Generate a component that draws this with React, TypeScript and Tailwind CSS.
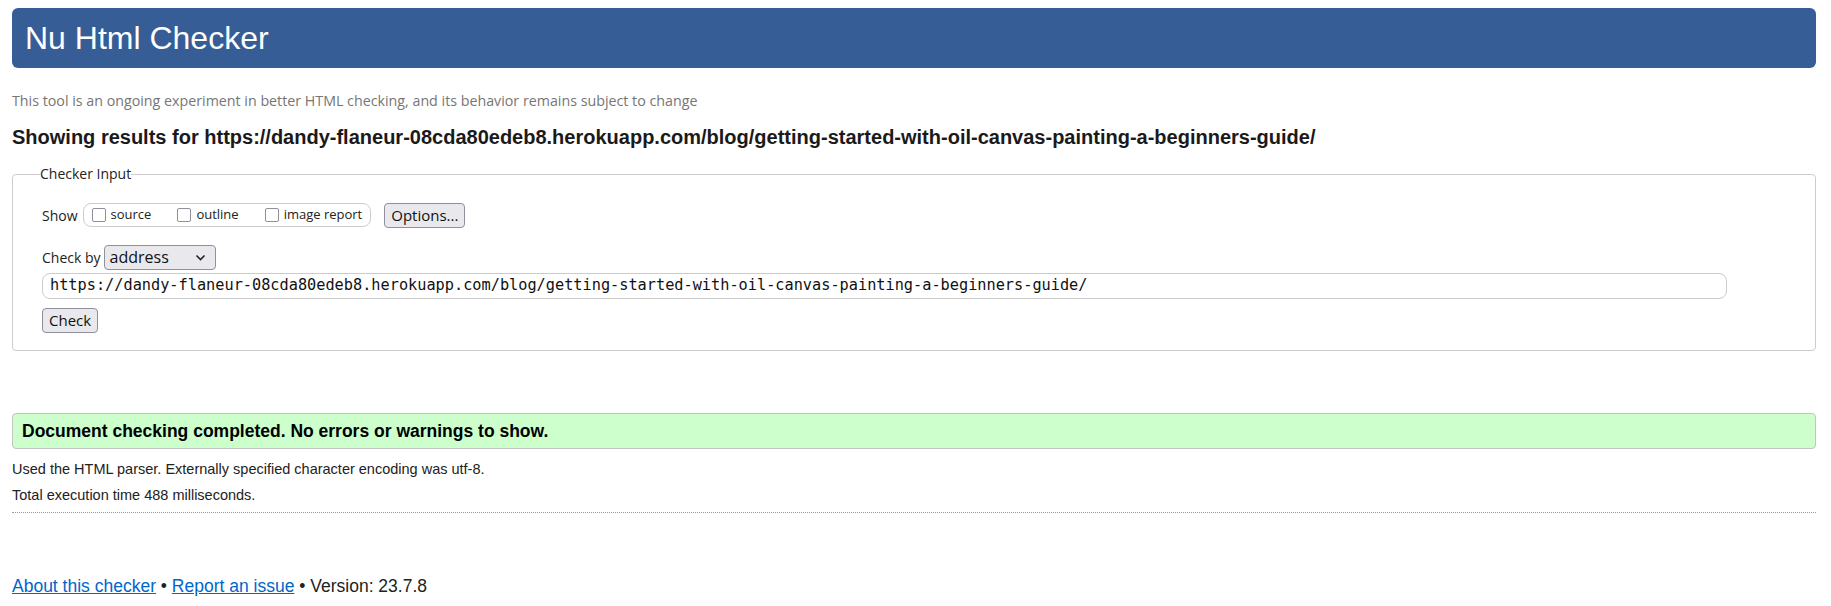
import React from 'react';

const URL = 'https://dandy-flaneur-08cda80edeb8.herokuapp.com/blog/getting-started-with-oil-canvas-painting-a-beginners-guide/';

const ui = "font-['Open_Sans',sans-serif]";

const Box: React.FC<{ label: string; gap?: string }> = ({ label, gap }) => (
  <label className={`flex items-center ${gap ?? ''}`}>
    <span className="w-[14px] h-[14px] border border-[#8f8f9d] rounded-[2px] bg-white" />
    <span className="ml-[5px] text-[13px] text-[#222]">{label}</span>
  </label>
);

export default function App() {
  return (
    <div className="bg-white min-h-[606px] pt-[8px] pl-[12px] pr-[15px] font-['Liberation_Sans',Arial,sans-serif] text-[#222]">
      <div className="h-[60px] bg-[#365d95] rounded-[6px] flex items-center pl-[13px]">
        <h1 className="text-white text-[32px] leading-none">Nu Html Checker</h1>
      </div>

      <p className={`mt-[23px] leading-[20px] text-[14.25px] text-[#767676] ${ui}`}>
        This tool is an ongoing experiment in better HTML checking, and its behavior remains subject to change
      </p>

      <h2 className="mt-[14px] leading-[24px] text-[20px] font-bold text-[#1a1a1a]">
        Showing results for {URL}
      </h2>

      <fieldset className={`mt-[16px] border border-[#cccccc] rounded-[4px] pl-[29px] pr-[29px] pt-[18px] pb-[17px] ${ui}`}>
        <legend className="-ml-[2px] px-0 text-[14px] leading-[18px] text-[#222]">Checker Input</legend>

        <div className="flex items-center h-[28px]">
          <span className="text-[14px]">Show</span>
          <div className="ml-[5px] h-[24px] flex items-center border border-[#cccccc] rounded-[8px] pl-[8px] pr-[8px]">
            <Box label="source" />
            <Box label="outline" gap="ml-[26px]" />
            <Box label="image report" gap="ml-[26px]" />
          </div>
          <button className="ml-[13px] h-[25px] px-[6px] bg-[#e9e9ed] border border-[#8f8f9d] rounded-[4px] text-[15px] leading-none text-[#111]">
            Options...
          </button>
        </div>

        <div className="flex items-center h-[26px] mt-[15px]">
          <span className="text-[14px]">Check by</span>
          <div className="ml-[3px] w-[112px] h-[25px] bg-[#e9e9ed] border border-[#8f8f9d] rounded-[4px] flex items-center justify-between pl-[5px] pr-[9px]">
            <span className="text-[16px] leading-none text-[#111]">address</span>
            <svg width="11" height="7" viewBox="0 0 11 7" fill="none">
              <path d="M1.5 1.5 L5.5 5.5 L9.5 1.5" stroke="#222" strokeWidth="1.6" />
            </svg>
          </div>
        </div>

        <div className="mt-[3px] w-[1685px] h-[26px] border border-[#cccccc] rounded-[8px] flex items-center pl-[7px]">
          <span className="font-['DejaVu_Sans_Mono',monospace] text-[15.25px] leading-none text-[#111] whitespace-nowrap">{URL}</span>
        </div>

        <button className="mt-[9px] h-[25px] px-[6px] bg-[#e9e9ed] border border-[#8f8f9d] rounded-[4px] text-[15px] leading-none text-[#111]">
          Check
        </button>
      </fieldset>

      <div className="mt-[62px] h-[36px] bg-[#ccffcc] border border-[#c4c4c4] rounded-[4px] flex items-center pl-[9px]">
        <p className="font-bold text-[17.5px] text-black">Document checking completed. No errors or warnings to show.</p>
      </div>

      <p className="mt-[10px] leading-[20px] text-[14.5px] text-[#222]">
        Used the HTML parser. Externally specified character encoding was utf-8.
      </p>
      <p className="mt-[6px] leading-[20px] text-[14.5px] text-[#222]">Total execution time 488 milliseconds.</p>

      <div className="mt-[7px] border-t border-dotted border-[#999999]" />

      <p className="mt-[62px] leading-[22px] text-[17.5px] text-[#222]">
        <a href="#" className="text-[#0066cc] underline">About this checker</a>
        {' • '}
        <a href="#" className="text-[#0066cc] underline">Report an issue</a>
        {' • Version: 23.7.8'}
      </p>
    </div>
  );
}
